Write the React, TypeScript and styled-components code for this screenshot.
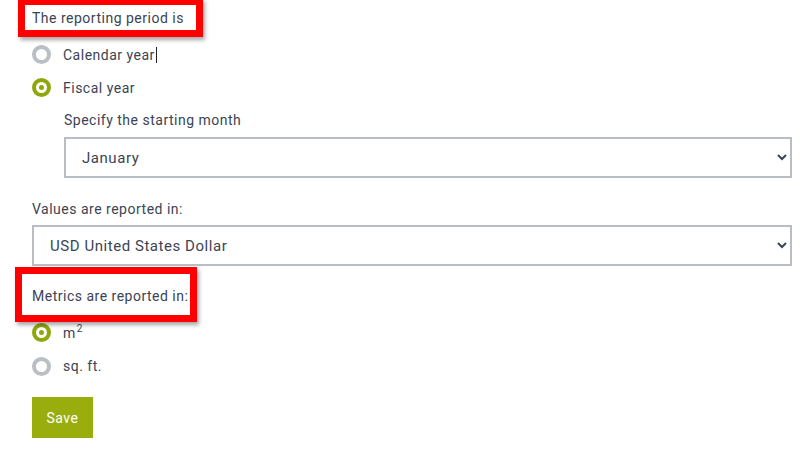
import styled, { createGlobalStyle } from "styled-components";

const GlobalStyle = createGlobalStyle`
  body {
    margin: 0;
    background: #ffffff;
    font-family: Roboto, "Liberation Sans", Arial, sans-serif;
    color: #3b4454;
  }
`;

const Page = styled.div`
  width: 802px;
  height: 455px;
  overflow: hidden;
  padding: 8px 10px 0 32px;
  box-sizing: border-box;
`;

const Label = styled.div<{ mt?: number }>`
  font-size: 14px;
  line-height: 20px;
  height: 20px;
  margin-top: ${(p) => p.mt || 0}px;
  letter-spacing: 0.5px;
`;

// annotation frame laid over a label
const Highlight = styled.span<{ t: number; r: number; b: number; l: number }>`
  position: relative;
  display: inline-block;
  &::before {
    content: "";
    position: absolute;
    top: ${(p) => p.t}px;
    right: ${(p) => p.r}px;
    bottom: ${(p) => p.b}px;
    left: ${(p) => p.l}px;
    border: 7px solid #ff0000;
    box-shadow: 2px 3px 4px rgba(0, 0, 0, 0.35);
    pointer-events: none;
  }
`;

const RadioGroup = styled.div<{ mt: number; rowHeight: number }>`
  margin-top: ${(p) => p.mt}px;
  display: flex;
  flex-direction: column;
  & > label {
    height: ${(p) => p.rowHeight}px;
  }
`;

const RadioRow = styled.label`
  display: flex;
  align-items: center;
  gap: 12px;
  font-size: 14px;
  letter-spacing: 0.5px;
  cursor: pointer;
`;

const RadioDot = styled.span<{ checked?: boolean }>`
  width: 19px;
  height: 19px;
  box-sizing: border-box;
  border-radius: 50%;
  border: 4px solid ${(p) => (p.checked ? "#8fa70b" : "#b9bfc5")};
  background: #ffffff;
  display: flex;
  align-items: center;
  justify-content: center;
  &::after {
    content: "";
    width: 5px;
    height: 5px;
    border-radius: 50%;
    background: ${(p) => (p.checked ? "#8fa70b" : "transparent")};
  }
`;

const Caret = styled.span`
  display: inline-block;
  width: 1px;
  height: 16px;
  background: #222;
  vertical-align: -3px;
  margin-left: 1px;
`;

const Sup = styled.sup`
  font-size: 10px;
  margin-left: 1px;
`;

const Sub = styled.div`
  padding-left: 32px;
`;

const Select = styled.select<{ mt: number }>`
  display: block;
  margin-top: ${(p) => p.mt}px;
  width: 100%;
  height: 41px;
  box-sizing: border-box;
  border: 2px solid #b9bec4;
  border-radius: 0;
  background: #ffffff;
  color: #3b4454;
  font-family: Roboto, "Liberation Sans", Arial, sans-serif;
  font-size: 15px;
  letter-spacing: 0.55px;
  padding: 0 10px 0 12px;
  outline: none;
`;

const SaveButton = styled.button`
  margin-top: 14px;
  width: 61px;
  height: 41px;
  border: none;
  background: #99ae0c;
  color: #ffffff;
  font-family: Roboto, "Liberation Sans", Arial, sans-serif;
  font-size: 14px;
  letter-spacing: 0.5px;
  cursor: pointer;
`;

export default function App() {
  return (
    <>
      <GlobalStyle />
      <Page>
        <Label>
          <Highlight t={-10} r={-19} b={-9} l={-14}>
            The reporting period is
          </Highlight>
        </Label>

        <RadioGroup mt={10} rowHeight={33}>
          <RadioRow>
            <RadioDot />
            <span>
              Calendar year
              <Caret />
            </span>
          </RadioRow>
          <RadioRow>
            <RadioDot checked />
            <span>Fiscal year</span>
          </RadioRow>
        </RadioGroup>

        <Sub>
          <Label mt={6}>Specify the starting month</Label>
          <Select mt={7} defaultValue="January">
            <option>January</option>
            <option>February</option>
            <option>March</option>
          </Select>
        </Sub>

        <Label mt={21}>Values are reported in:</Label>
        <Select mt={6} defaultValue="USD United States Dollar">
          <option>USD United States Dollar</option>
          <option>EUR Euro</option>
        </Select>

        <Label mt={20}>
          <Highlight t={-19} r={-9} b={-16} l={-17}>
            Metrics are reported in:
          </Highlight>
        </Label>

        <RadioGroup mt={9} rowHeight={34}>
          <RadioRow>
            <RadioDot checked />
            <span>
              m<Sup>2</Sup>
            </span>
          </RadioRow>
          <RadioRow>
            <RadioDot />
            <span>sq. ft.</span>
          </RadioRow>
        </RadioGroup>

        <SaveButton>Save</SaveButton>
      </Page>
    </>
  );
}
